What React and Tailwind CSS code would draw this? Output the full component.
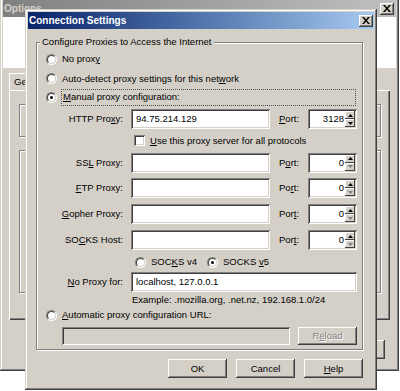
import React from 'react';

const frame = 'shadow-[inset_-1px_-1px_#404040,inset_1px_1px_#d4d0c8,inset_-2px_-2px_#808080,inset_2px_2px_#ffffff]';
const btn = 'shadow-[inset_-1px_-1px_#404040,inset_1px_1px_#ffffff,inset_-2px_-2px_#808080,inset_2px_2px_#d4d0c8]';
const smallBtn = 'shadow-[inset_-1px_-1px_#404040,inset_1px_1px_#ffffff]';
const sunken = 'shadow-[inset_1px_1px_#808080,inset_-1px_-1px_#ffffff,inset_2px_2px_#404040,inset_-2px_-2px_#d4d0c8]';
const disabledText = 'text-[#808080] [text-shadow:1px_1px_0_#ffffff]';

function U({ children }) {
  return <span className="underline underline-offset-[1px] decoration-[1px]">{children}</span>;
}

function CloseButton() {
  return (
    <div className={`w-[14px] h-[12px] bg-[#d4d0c8] flex items-center justify-center ${btn}`}>
      <svg width="8" height="7" viewBox="0 0 8 7">
        <path d="M0 0h2l2 2.4L6 0h2L5 3.5 8 7H6L4 4.6 2 7H0l3-3.5z" fill="#000" />
      </svg>
    </div>
  );
}

function Radio({ checked }) {
  return (
    <span className="w-[11px] h-[11px] shrink-0 rounded-full border border-t-[#808080] border-l-[#808080] border-r-white border-b-white flex">
      <span className="flex-1 rounded-full border border-t-[#404040] border-l-[#404040] border-r-[#d4d0c8] border-b-[#d4d0c8] bg-white flex items-center justify-center">
        {checked && <span className="w-[3px] h-[3px] rounded-full bg-black" />}
      </span>
    </span>
  );
}

function Field({ width, children, disabled }) {
  return (
    <div
      className={`h-[20px] pl-[5px] flex items-center ${disabled ? 'bg-[#d4d0c8]' : 'bg-white'} ${sunken}`}
      style={{ width }}
    >
      {children}
    </div>
  );
}

function Spin({ up, dim }) {
  return (
    <div className={`h-[8px] bg-[#d4d0c8] flex items-center justify-center ${smallBtn}`}>
      <svg width="5" height="3" viewBox="0 0 5 3">
        <path d={up ? 'M2.5 0L5 3H0z' : 'M0 0h5L2.5 3z'} fill={dim ? '#808080' : '#000'} />
      </svg>
    </div>
  );
}

function Port({ value }) {
  const zero = value === '0';
  return (
    <div className={`w-[49px] h-[20px] bg-white p-[2px] flex ${sunken}`}>
      <span className="flex-1 text-right pr-[1px] leading-[16px]">{value}</span>
      <div className="w-[10px] flex flex-col">
        <Spin up />
        <Spin dim={zero} />
      </div>
    </div>
  );
}

function ProxyRow({ h, label, value, portLabel, port }) {
  return (
    <div className="flex items-center" style={{ height: h }}>
      <span className="w-[86px] text-right">{label}</span>
      <div className="ml-[8px]">
        <Field width={139}>{value}</Field>
      </div>
      <span className="ml-[9px] w-[29px]">{portLabel}</span>
      <Port value={port} />
    </div>
  );
}

function OptionsWindow() {
  return (
    <div className={`absolute left-0 top-[-3px] w-[399px] h-[374px] bg-[#d4d0c8] p-[3px] flex flex-col ${frame}`}>
      <div className="h-[17px] flex items-center justify-between pl-[1px] pr-[2px] bg-gradient-to-r from-[#808080] to-[#c0c0c0]">
        <span className="font-bold text-[10px] text-[#d4d0c8]">Options</span>
        <CloseButton />
      </div>
      <div className="h-[51px] bg-white" />
      <div className="mt-[5px] ml-[6px] mr-[6px] flex flex-col">
        <div className="flex">
          <div className="w-[50px] h-[17px] pl-[5px] pt-[3px] bg-[#d4d0c8] shadow-[inset_1px_1px_#ffffff,inset_-1px_0_#404040]">General</div>
        </div>
        <div className={`h-[230px] pt-[14px] px-[10px] pr-[9px] flex flex-col shadow-[inset_1px_1px_#ffffff,inset_-1px_-1px_#404040,inset_-2px_-2px_#808080]`}>
          <div className="h-[33px] border border-[#808080] shadow-[1px_1px_0_#ffffff,inset_1px_1px_0_#ffffff]" />
          <div className="mt-[13px] h-[143px] border border-[#808080] shadow-[1px_1px_0_#ffffff,inset_1px_1px_0_#ffffff]" />
        </div>
      </div>
      <div className={`mt-auto mb-[9px] mr-[11px] self-end w-[59px] h-[19px] bg-[#d4d0c8] ${btn}`} />
    </div>
  );
}

function ConnectionDialog() {
  return (
    <div className={`absolute left-[25px] top-[9px] w-[352px] h-[381px] bg-[#d4d0c8] p-[3px] flex flex-col ${frame}`}>
      <div className="h-[17px] shrink-0 flex items-center justify-between pl-[1px] pr-[1px] bg-gradient-to-r from-[#0a246a] to-[#a6caf0]">
        <span className="font-bold text-white text-[10px]">Connection Settings</span>
        <CloseButton />
      </div>

      <fieldset className="mt-[7px] ml-[8px] w-[327px] border border-[#808080] shadow-[1px_1px_0_#ffffff,inset_1px_1px_0_#ffffff]">
        <legend className="ml-[3px] px-[2px] bg-[#d4d0c8] leading-[12px]">Configure Proxies to Access the Internet</legend>

        <div className="pt-[1px] h-[21px] pl-[9px] flex items-center gap-[5px]">
          <Radio />
          <span>No prox<U>y</U></span>
        </div>
        <div className="h-[19px] pl-[9px] flex items-center gap-[5px]">
          <Radio />
          <span>Auto-detect proxy settings for this net<U>w</U>ork</span>
        </div>
        <div className="h-[18px] pl-[9px] pr-[6px] flex items-center gap-[4px]">
          <Radio checked />
          <span className="flex-1 h-[17px] pl-[1px] flex items-center border border-dotted border-[#505050]">
            <span><U>M</U>anual proxy configuration:</span>
          </span>
        </div>

        <ProxyRow h={26} label={<>HTTP Pro<U>x</U>y:</>} value="94.75.214.129" portLabel={<><U>P</U>ort:</>} port="3128" />

        <div className="h-[17px] pl-[97px] flex items-center gap-[5px]">
          <span className={`w-[11px] h-[11px] bg-white ${sunken}`} />
          <span><U>U</U>se this proxy server for all protocols</span>
        </div>

        <ProxyRow h={27} label={<>SS<U>L</U> Proxy:</>} value="" portLabel={<>P<U>o</U>rt:</>} port="0" />
        <ProxyRow h={24} label={<><U>F</U>TP Proxy:</>} value="" portLabel={<>Po<U>r</U>t:</>} port="0" />
        <ProxyRow h={28} label={<><U>G</U>opher Proxy:</>} value="" portLabel={<>Por<U>t</U>:</>} port="0" />
        <ProxyRow h={24} label={<>SO<U>C</U>KS Host:</>} value="" portLabel={<>Por<U>t</U>:</>} port="0" />

        <div className="h-[20px] pl-[98px] flex items-center">
          <div className="w-[72px] flex items-center gap-[5px]">
            <Radio />
            <span>SOC<U>K</U>S v4</span>
          </div>
          <div className="flex items-center gap-[5px]">
            <Radio checked />
            <span>SOCKS <U>v</U>5</span>
          </div>
        </div>

        <div className="h-[20px] flex items-center">
          <span className="w-[86px] text-right"><U>N</U>o Proxy for:</span>
          <div className="ml-[8px]">
            <Field width={226}>localhost, 127.0.0.1</Field>
          </div>
        </div>

        <div className="h-[16px] pl-[95px] flex items-center">
          Example: .mozilla.org, .net.nz, 192.168.1.0/24
        </div>

        <div className="h-[14px] pl-[9px] flex items-center gap-[5px]">
          <Radio />
          <span><U>A</U>utomatic proxy configuration URL:</span>
        </div>

        <div className="pt-[5px] pb-[4px] pl-[25px] flex items-center">
          <div className={`w-[228px] h-[18px] bg-[#d4d0c8] ${sunken}`} />
          <div className={`ml-[8px] w-[59px] h-[18px] bg-[#d4d0c8] flex items-center justify-center ${btn}`}>
            <span className={disabledText}>R<span className="underline">e</span>load</span>
          </div>
        </div>
      </fieldset>

      <div className="mt-[9px] mr-[11px] flex justify-end gap-[9px]">
        <div className={`w-[59px] h-[19px] bg-[#d4d0c8] flex items-center justify-center ${btn}`}>OK</div>
        <div className={`w-[59px] h-[19px] bg-[#d4d0c8] flex items-center justify-center ${btn}`}>Cancel</div>
        <div className={`w-[59px] h-[19px] bg-[#d4d0c8] flex items-center justify-center ${btn}`}><span><U>H</U>elp</span></div>
      </div>
    </div>
  );
}

export default function App() {
  return (
    <div className="relative w-[400px] h-[391px] overflow-hidden bg-white font-['Liberation_Sans',Arial,sans-serif] text-[9.5px] leading-[12px] text-black">
      <OptionsWindow />
      <ConnectionDialog />
    </div>
  );
}
